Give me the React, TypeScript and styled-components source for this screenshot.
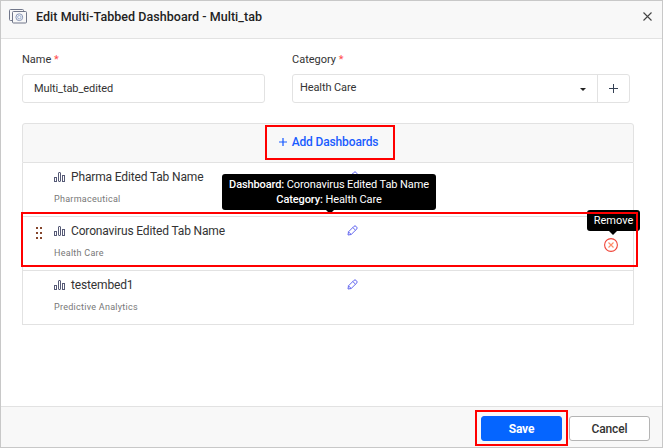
import React from 'react';
import styled, { createGlobalStyle } from 'styled-components';

const GlobalStyle = createGlobalStyle`
  *, *::before, *::after { box-sizing: border-box; }
  body { margin: 0; font-family: Roboto, 'Liberation Sans', sans-serif; color: #333; }
`;

const Dialog = styled.div`
  position: relative;
  display: flex;
  flex-direction: column;
  width: 663px;
  height: 448px;
  background: #fff;
  border: 1px solid #c8c8c8;
  overflow: hidden;
`;

const Header = styled.header`
  display: flex;
  align-items: center;
  height: 38px;
  padding: 0 10px 6px 8px;
  background: #f8f8f8;
  border-bottom: 1px solid #e2e2e2;
`;

const Title = styled.h1`
  flex: 1;
  margin: 0 0 0 9px;
  font-size: 12.5px;
  line-height: 16px;
  letter-spacing: 0.04px;
  font-weight: 500;
  color: #222;
`;

const Body = styled.main`
  flex: 1;
  padding: 13px 28px 0 21px;
`;

const Fields = styled.div`
  display: flex;
  gap: 27px;
`;

const Field = styled.div<{ $width: number }>`
  width: ${(p) => p.$width}px;
`;

const Label = styled.label`
  display: block;
  height: 22px;
  font-size: 11px;
  line-height: 16px;
`;

const Required = styled.span`
  color: #ff4d4d;
`;

const Control = styled.div`
  display: flex;
  height: 29px;
  border: 1px solid #e2e2e2;
  border-radius: 3px;
  font-size: 11px;
`;

const Value = styled.span<{ $inset: number; $line?: number }>`
  flex: 1;
  padding-left: ${(p) => p.$inset}px;
  line-height: ${(p) => p.$line ?? 27}px;
  letter-spacing: -0.1px;
`;

const Caret = styled.span`
  align-self: center;
  margin: 1px 11px 0 0;
  border: 3.5px solid transparent;
  border-top-color: #222;
  border-bottom: 0;
`;

const AddCategory = styled.span`
  display: flex;
  align-items: center;
  justify-content: center;
  width: 32px;
  border-left: 1px solid #e2e2e2;
`;

const List = styled.section`
  width: 612px;
  margin-top: 20px;
`;

const AddBar = styled.div`
  display: flex;
  align-items: center;
  justify-content: center;
  height: 40px;
  padding-bottom: 2px;
  background: #f8f8f8;
  border: 1px solid #e2e2e2;
  border-radius: 3px 3px 0 0;
`;

const AddLink = styled.a`
  display: flex;
  align-items: center;
  gap: 5px;
  padding-left: 1px;
  font-size: 12px;
  letter-spacing: -0.14px;
  font-weight: 500;
  color: #1a5cff;
`;

const Row = styled.div`
  display: grid;
  grid-template-columns: 31px 293px 1fr 29px;
  height: 54px;
  border: 1px solid #e2e2e2;
  border-top: 0;
`;

const Grip = styled.span`
  padding: 10px 0 0 13px;
  line-height: 0;
`;

const Name = styled.div`
  display: flex;
  align-items: center;
  gap: 6px;
  margin-top: 6px;
  height: 16px;
  font-size: 12px;
  letter-spacing: -0.15px;
`;

const Category = styled.div`
  margin-top: 8px;
  font-size: 9px;
  line-height: 12px;
  letter-spacing: 0.27px;
  color: #777;
`;

const Edit = styled.span`
  padding-top: 8px;
  line-height: 0;
`;

const Remove = styled.span`
  padding-top: 21px;
  line-height: 0;
`;

const Footer = styled.footer`
  display: flex;
  justify-content: flex-end;
  gap: 7px;
  height: 41px;
  padding: 9px 12px 0 0;
  background: #f8f8f8;
  border-top: 1px solid #e2e2e2;
`;

const Button = styled.button<{ $primary?: boolean }>`
  width: 81px;
  height: 25px;
  padding: 0;
  border: 1px solid ${(p) => (p.$primary ? '#0565ff' : '#b4b4b4')};
  border-radius: 3px;
  background: ${(p) => (p.$primary ? '#0565ff' : '#fff')};
  color: ${(p) => (p.$primary ? '#fff' : '#333')};
  font: ${(p) => (p.$primary ? 700 : 500)} 12px Roboto, sans-serif;
  letter-spacing: -0.15px;
`;

const Tooltip = styled.div<{ $x: number; $y: number; $w: number; $h: number; $arrow: number; $spacing?: number }>`
  position: absolute;
  left: ${(p) => p.$x - 1}px;
  top: ${(p) => p.$y - 1}px;
  width: ${(p) => p.$w}px;
  height: ${(p) => p.$h}px;
  padding-top: 3px;
  border-radius: 3px;
  background: #000;
  color: #fff;
  font-size: 11px;
  line-height: 15px;
  letter-spacing: ${(p) => p.$spacing ?? 0}px;
  text-align: center;
  white-space: nowrap;

  &::after {
    content: '';
    position: absolute;
    top: 100%;
    left: ${(p) => p.$arrow - 4}px;
    border: 4px solid transparent;
    border-top-color: #000;
    border-bottom: 0;
  }

  b { font-weight: 500; }
`;

const Highlight = styled.div<{ $x: number; $y: number; $w: number; $h: number }>`
  position: absolute;
  left: ${(p) => p.$x - 1}px;
  top: ${(p) => p.$y - 1}px;
  width: ${(p) => p.$w}px;
  height: ${(p) => p.$h}px;
  border: 2px solid #f00;
  pointer-events: none;
`;

const TabsIcon = () => (
  <svg width="18" height="15" viewBox="0 0 18 15" fill="none" stroke="#71778a">
    <path d="M3 11.5H1.5q-1 0-1-1v-9q0-1 1-1h12q1 0 1 1v1" />
    <rect x="3.5" y="2.5" width="14" height="11.5" rx="1" />
    <circle cx="10.3" cy="8.2" r="3.4" stroke="#8b98b8" />
    <circle cx="10.3" cy="8.2" r="1.7" stroke="#8ba3cb" strokeWidth=".8" />
  </svg>
);

const CloseIcon = () => (
  <svg width="9" height="9" viewBox="0 0 9 9" stroke="#444" strokeWidth="1.1">
    <path d="M.5.5l8 8M8.5.5l-8 8" />
  </svg>
);

const PlusIcon = ({ size, color, weight = 1 }: { size: number; color: string; weight?: number }) => (
  <svg width={size} height={size} viewBox="0 0 9 9" stroke={color} strokeWidth={weight}>
    <path d="M0 4.5h9M4.5 0v9" />
  </svg>
);

const ChartIcon = () => (
  <svg width="11" height="10" viewBox="0 0 11 10" fill="none" stroke="#565a76" strokeWidth="1">
    <rect x=".5" y="5.5" width="2" height="4" />
    <rect x="4.5" y=".5" width="2" height="9" rx=".5" />
    <rect x="8.5" y="3.5" width="2" height="6" />
  </svg>
);

const PencilIcon = () => (
  <svg width="11" height="11" viewBox="0 0 11 11" fill="none" stroke="#6468f0" strokeWidth="1" strokeLinejoin="round">
    <path d="M1 10l.5-3.2L7 1.3Q8 .4 9 1.3l.7.7Q10.6 3 9.7 4L4.2 9.5zM5.8 2.5l2.7 2.7M1.5 6.8l2.7 2.7" />
  </svg>
);

const GripIcon = () => (
  <svg width="6" height="13" viewBox="0 0 6 13" fill="#85462c">
    {[0, 5, 10].map((y) => (
      <React.Fragment key={y}>
        <rect y={y} width="2" height="2" />
        <rect x="4" y={y} width="2" height="2" />
      </React.Fragment>
    ))}
  </svg>
);

const RemoveIcon = () => (
  <svg width="14" height="14" viewBox="0 0 14 14" fill="none">
    <circle cx="7" cy="7" r="6.4" stroke="#f04438" strokeWidth="1.1" />
    <path d="M4.5 4.5l5 5M9.5 4.5l-5 5" stroke="#ff8b68" strokeWidth="1.1" />
  </svg>
);

const dashboards = [
  { name: 'Pharma Edited Tab Name', category: 'Pharmaceutical' },
  { name: 'Coronavirus Edited Tab Name', category: 'Health Care', active: true },
  { name: 'testembed1', category: 'Predictive Analytics' },
];

export default function App() {
  return (
    <>
      <GlobalStyle />
      <Dialog>
        <Header>
          <TabsIcon />
          <Title>Edit Multi-Tabbed Dashboard - Multi_tab</Title>
          <CloseIcon />
        </Header>
        <Body>
          <Fields>
            <Field $width={243}>
              <Label>Name <Required>*</Required></Label>
              <Control><Value $inset={11}>Multi_tab_edited</Value></Control>
            </Field>
            <Field $width={338}>
              <Label>Category <Required>*</Required></Label>
              <Control>
                <Value $inset={7} $line={25}>Health Care</Value>
                <Caret />
                <AddCategory><PlusIcon size={9} color="#344054" /></AddCategory>
              </Control>
            </Field>
          </Fields>
          <List>
            <AddBar>
              <AddLink><PlusIcon size={8} color="#1a5cff" weight={1.4} />Add Dashboards</AddLink>
            </AddBar>
            {dashboards.map((d) => (
              <Row key={d.name}>
                <Grip>{d.active && <GripIcon />}</Grip>
                <div>
                  <Name><ChartIcon />{d.name}</Name>
                  <Category>{d.category}</Category>
                </div>
                <Edit><PencilIcon /></Edit>
                <Remove>{d.active && <RemoveIcon />}</Remove>
              </Row>
            ))}
          </List>
        </Body>
        <Footer>
          <Button $primary>Save</Button>
          <Button>Cancel</Button>
        </Footer>
        <Tooltip $x={222} $y={174} $w={214} $h={36} $arrow={108} $spacing={-0.1}>
          <b>Dashboard:</b> Coronavirus Edited Tab Name<br />
          <b>Category:</b> Health Care
        </Tooltip>
        <Tooltip $x={587} $y={210} $w={53} $h={21} $arrow={26}>Remove</Tooltip>
        <Highlight $x={265} $y={125} $w={130} $h={35} />
        <Highlight $x={21} $y={212} $w={617} $h={55} />
        <Highlight $x={475} $y={410} $w={93} $h={36} />
      </Dialog>
    </>
  );
}
